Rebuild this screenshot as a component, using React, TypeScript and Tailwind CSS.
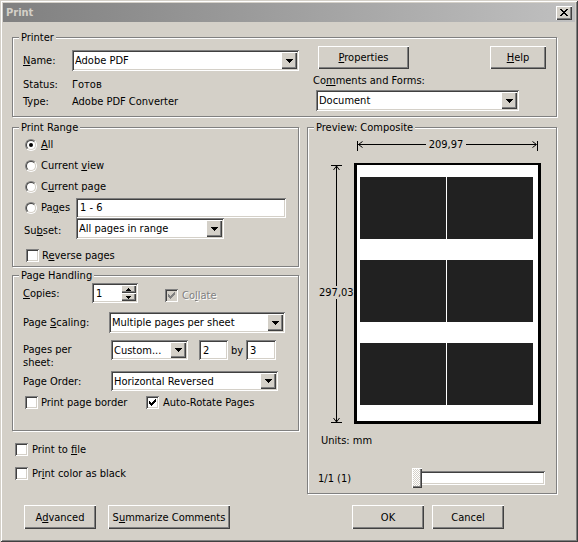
import React from 'react'

const SUNKEN =
  'shadow-[inset_1px_1px_0_#808080,inset_-1px_-1px_0_#fff,inset_2px_2px_0_#404040,inset_-2px_-2px_0_#d4d0c8]'
const RAISED = 'shadow-[inset_1px_1px_0_#fff,inset_-1px_-1px_0_#404040,inset_-2px_-2px_0_#808080]'
const GROUP = 'border border-[#808080] shadow-[1px_1px_0_#fff,inset_1px_1px_0_#fff]'

// turn a little pixel map into a path
function pix(rows: string[]) {
  let d = ''
  rows.forEach((r, y) =>
    r.split('').forEach((c, x) => {
      if (c === 'X') d += `M${x} ${y}h1v1h-1z`
    })
  )
  return d
}

const CHECK = ['......X', '.....XX', 'X...XXX', 'XX.XXX.', 'XXXXX..', '.XXX...', '..X....']
const DOWN = ['XXXXXXX', '.XXXXX.', '..XXX..', '...X...']
const UP = ['..X..', '.XXX.', 'XXXXX']
const CLOSE = ['XX....XX', '.XX..XX.', '..XXXX..', '...XX...', '..XXXX..', '.XX..XX.', 'XX....XX']

function Glyph({ map, w, h, color = '#000' }: { map: string[]; w: number; h: number; color?: string }) {
  return (
    <svg width={w} height={h} viewBox={`0 0 ${w} ${h}`} shapeRendering="crispEdges">
      <path d={pix(map)} fill={color} />
    </svg>
  )
}

function Btn({ className = '', children }: { className?: string; children: React.ReactNode }) {
  return <div className={`flex items-center justify-center bg-[#d4d0c8] ${RAISED} ${className}`}>{children}</div>
}

function Combo({ className = '', value }: { className?: string; value: string }) {
  return (
    <div className={`flex items-stretch bg-white py-[2px] pr-[2px] pl-[3px] ${SUNKEN} ${className}`}>
      <span className="flex-1 self-center truncate">{value}</span>
      <div className={`w-[16px] flex items-center justify-center bg-[#d4d0c8] ${RAISED}`}>
        <Glyph map={DOWN} w={7} h={4} />
      </div>
    </div>
  )
}

function TextBox({ className = '', children }: { className?: string; children: React.ReactNode }) {
  return <div className={`flex items-center bg-white pl-[4px] ${SUNKEN} ${className}`}>{children}</div>
}

function Radio({ checked = false }: { checked?: boolean }) {
  return (
    <span className="flex w-[12px] h-[12px] shrink-0 rounded-full border border-t-[#808080] border-l-[#808080] border-r-white border-b-white">
      <span className="flex flex-1 items-center justify-center rounded-full border border-t-[#404040] border-l-[#404040] border-r-[#d4d0c8] border-b-[#d4d0c8] bg-white">
        {checked && <span className="w-[4px] h-[4px] rounded-full bg-black" />}
      </span>
    </span>
  )
}

function Check({ checked = false, disabled = false }: { checked?: boolean; disabled?: boolean }) {
  return (
    <span
      className={`flex w-[13px] h-[13px] shrink-0 items-center justify-center ${disabled ? 'bg-[#d4d0c8]' : 'bg-white'} ${SUNKEN}`}
    >
      {checked && <Glyph map={CHECK} w={7} h={7} color={disabled ? '#808080' : '#000'} />}
    </span>
  )
}

function Legend({ children }: { children: React.ReactNode }) {
  return <legend className="ml-[6px] px-[2px] leading-[13px] bg-[#d4d0c8]">{children}</legend>
}

function Preview() {
  return (
    <fieldset className={`${GROUP} h-[373px]`}>
      <Legend>Preview: Composite</Legend>
      <div className="relative h-[300px] pt-[29px] pl-[46px]">
        <div className="w-[187px] h-[261px] bg-white border-[3px] border-t-2 border-black pt-[12px] pl-[3px]">
          <div className="grid grid-cols-[86px_86px] gap-x-[1px] gap-y-[21px]">
            {[0, 1, 2, 3, 4, 5].map((i) => (
              <div key={i} className="h-[62px] bg-[#212121]" />
            ))}
          </div>
        </div>
        <svg className="absolute inset-0" width="248" height="300" shapeRendering="crispEdges">
          <g stroke="#000" strokeWidth="1" fill="none">
            <path d="M49.5 7v10M50 10.5h178M229.5 7v10" />
            <path d="M50.5 10.5l4 -3M50.5 10.5l4 3M228.5 10.5l-4 -3M228.5 10.5l-4 3" shapeRendering="auto" />
            <path d="M23 31.5h11M28.5 32v256M23 288.5h11" />
            <path d="M28.5 32l-3 4M28.5 32l3 4M28.5 288l-3 -4M28.5 288l3 -4" shapeRendering="auto" />
          </g>
        </svg>
        <span className="absolute left-[118px] top-[4px] w-[40px] text-center bg-[#d4d0c8]">209,97</span>
        <span className="absolute left-[11px] top-[152px] w-[34px] text-center bg-[#d4d0c8]">297,03</span>
      </div>
      <div className="pl-[13px]">Units: mm</div>
      <div className="mt-[21px] flex items-center h-[20px] pl-[10px]">
        <span className="w-[94px]">1/1 (1)</span>
        <div className="relative w-[133px] h-[20px] flex items-center">
          <div className={`w-full h-[14px] bg-white ${SUNKEN}`} />
          <div
            className={`absolute left-0 top-0 w-[10px] h-[20px] bg-[repeating-conic-gradient(#fff_0_25%,#d4d0c8_0_50%)] bg-size-[2px_2px] ${RAISED}`}
          />
        </div>
      </div>
    </fieldset>
  )
}

export default function App() {
  return (
    <div
      className="w-[578px] h-[542px] overflow-hidden bg-[#d4d0c8] pt-[3px] text-[11px] leading-[13px] text-black font-['DejaVu_Sans_Condensed','Liberation_Sans',sans-serif] shadow-[inset_1px_1px_0_#d4d0c8,inset_-1px_-1px_0_#404040,inset_2px_2px_0_#fff,inset_-2px_-2px_0_#808080]"
    >
      {/* title bar */}
      <div className="mx-[3px] h-[19px] flex items-center justify-between pl-[3px] pr-[3px] bg-linear-to-r from-[#808080] to-[#c0c0c0]">
        <span className="font-bold text-[#d4d0c8]">Print</span>
        <Btn className="w-[16px] h-[14px]">
          <Glyph map={CLOSE} w={8} h={7} />
        </Btn>
      </div>

      <div className="pl-[12px] pr-[21px]">
        {/* printer */}
        <fieldset className={`${GROUP} mt-[9px] h-[86px]`}>
          <Legend>Printer</Legend>
          <div className="flex">
            <div className="w-[300px] pl-[10px]">
              <div className="mt-[6px] flex items-center">
                <span className="w-[49px]">
                  <u>N</u>ame:
                </span>
                <Combo className="w-[227px] h-[21px]" value="Adobe PDF" />
              </div>
              <div className="mt-[7px] flex">
                <span className="w-[49px]">Status:</span>
                <span>Готов</span>
              </div>
              <div className="mt-[4px] flex">
                <span className="w-[49px]">Type:</span>
                <span>Adobe PDF Converter</span>
              </div>
            </div>
            <div className="w-[233px]">
              <div className="mt-[2px] flex">
                <Btn className="ml-[5px] w-[91px] h-[23px]">
                  <span>
                    <u>P</u>roperties
                  </span>
                </Btn>
                <Btn className="ml-[81px] w-[56px] h-[23px]">
                  <span>
                    <u>H</u>elp
                  </span>
                </Btn>
              </div>
              <div className="mt-[5px]">
                Co<u>m</u>ments and Forms:
              </div>
              <Combo className="mt-[3px] ml-[3px] w-[203px] h-[21px]" value="Document" />
            </div>
          </div>
        </fieldset>

        <div className="mt-[4px] flex gap-[8px]">
          {/* left column */}
          <div className="w-[287px]">
            <fieldset className={`${GROUP} h-[146px]`}>
              <Legend>Print Range</Legend>
              <div className="h-[21px] flex items-center gap-[4px] pl-[12px]">
                <Radio checked />
                <span>
                  <u>A</u>ll
                </span>
              </div>
              <div className="h-[21px] flex items-center gap-[4px] pl-[12px]">
                <Radio />
                <span>
                  Current <u>v</u>iew
                </span>
              </div>
              <div className="h-[21px] flex items-center gap-[4px] pl-[12px]">
                <Radio />
                <span>
                  C<u>u</u>rrent page
                </span>
              </div>
              <div className="h-[21px] flex items-center pl-[12px]">
                <div className="w-[51px] flex items-center gap-[4px]">
                  <Radio />
                  <span>
                    Pa<u>g</u>es
                  </span>
                </div>
                <TextBox className="w-[210px] h-[20px]">1 - 6</TextBox>
              </div>
              <div className="h-[21px] flex items-center pl-[11px]">
                <span className="w-[52px] pt-[4px]">
                  Su<u>b</u>set:
                </span>
                <Combo className="w-[148px] h-[21px]" value="All pages in range" />
              </div>
              <div className="mt-[10px] flex items-center gap-[3px] pl-[13px]">
                <Check />
                <span>
                  R<u>e</u>verse pages
                </span>
              </div>
            </fieldset>

            <fieldset className={`${GROUP} mt-[2px] h-[162px]`}>
              <Legend>Page Handling</Legend>
              <div className="mt-[1px] h-[20px] flex items-center pl-[10px]">
                <span className="w-[69px]">
                  <u>C</u>opies:
                </span>
                <div className={`w-[46px] h-[20px] flex items-stretch bg-white py-[2px] pr-[2px] pl-[4px] ${SUNKEN}`}>
                  <span className="flex-1 self-center">1</span>
                  <div className="w-[15px] flex flex-col">
                    <div className={`flex-1 flex items-center justify-center bg-[#d4d0c8] ${RAISED}`}>
                      <Glyph map={UP} w={5} h={3} />
                    </div>
                    <div className={`flex-1 flex items-center justify-center bg-[#d4d0c8] ${RAISED}`}>
                      <Glyph map={[...UP].reverse()} w={5} h={3} />
                    </div>
                  </div>
                </div>
                <div className="ml-[27px] pt-[4px] flex items-center gap-[4px] text-[#808080] [text-shadow:1px_1px_0_#fff]">
                  <Check checked disabled />
                  <span>
                    Co<u>l</u>late
                  </span>
                </div>
              </div>
              <div className="mt-[9px] h-[21px] flex items-center pl-[10px]">
                <span className="w-[86px]">
                  Page <u>S</u>caling:
                </span>
                <Combo className="w-[176px] h-[21px]" value="Multiple pages per sheet" />
              </div>
              <div className="mt-[7px] h-[20px] flex items-start pl-[10px]">
                <span className="w-[88px] pt-[3px]">
                  Pages per
                  <br />
                  sheet:
                </span>
                <Combo className="w-[77px] h-[20px]" value="Custom..." />
                <TextBox className="ml-[11px] w-[29px] h-[20px]">2</TextBox>
                <span className="ml-[3px] w-[15px] self-center">by</span>
                <TextBox className="w-[30px] h-[20px]">3</TextBox>
              </div>
              <div className="mt-[11px] h-[20px] flex items-center pl-[10px]">
                <span className="w-[88px]">Page Order:</span>
                <Combo className="w-[167px] h-[20px]" value="Horizontal Reversed" />
              </div>
              <div className="mt-[5px] flex items-center pl-[12px]">
                <div className="w-[121px] flex items-center gap-[3px]">
                  <Check />
                  <span>Print page border</span>
                </div>
                <div className="flex items-center gap-[4px]">
                  <Check checked />
                  <span>Auto-Rotate Pages</span>
                </div>
              </div>
            </fieldset>

            <div className="mt-[12px] ml-[3px] flex items-center gap-[4px]">
              <Check />
              <span>
                Print to <u>f</u>ile
              </span>
            </div>
            <div className="mt-[11px] ml-[3px] flex items-center gap-[4px]">
              <Check />
              <span>
                Pr<u>i</u>nt color as black
              </span>
            </div>
            <div className="mt-[25px] ml-[12px] flex gap-[12px]">
              <Btn className="w-[72px] h-[24px]">
                <span>
                  A<u>d</u>vanced
                </span>
              </Btn>
              <Btn className="w-[122px] h-[24px]">
                <span>
                  S<u>u</u>mmarize Comments
                </span>
              </Btn>
            </div>
          </div>

          {/* right column */}
          <div className="w-[250px]">
            <Preview />
            <div className="mt-[11px] ml-[45px] flex gap-[8px]">
              <Btn className="w-[72px] h-[24px]">OK</Btn>
              <Btn className="w-[72px] h-[24px]">Cancel</Btn>
            </div>
          </div>
        </div>
      </div>
    </div>
  )
}
